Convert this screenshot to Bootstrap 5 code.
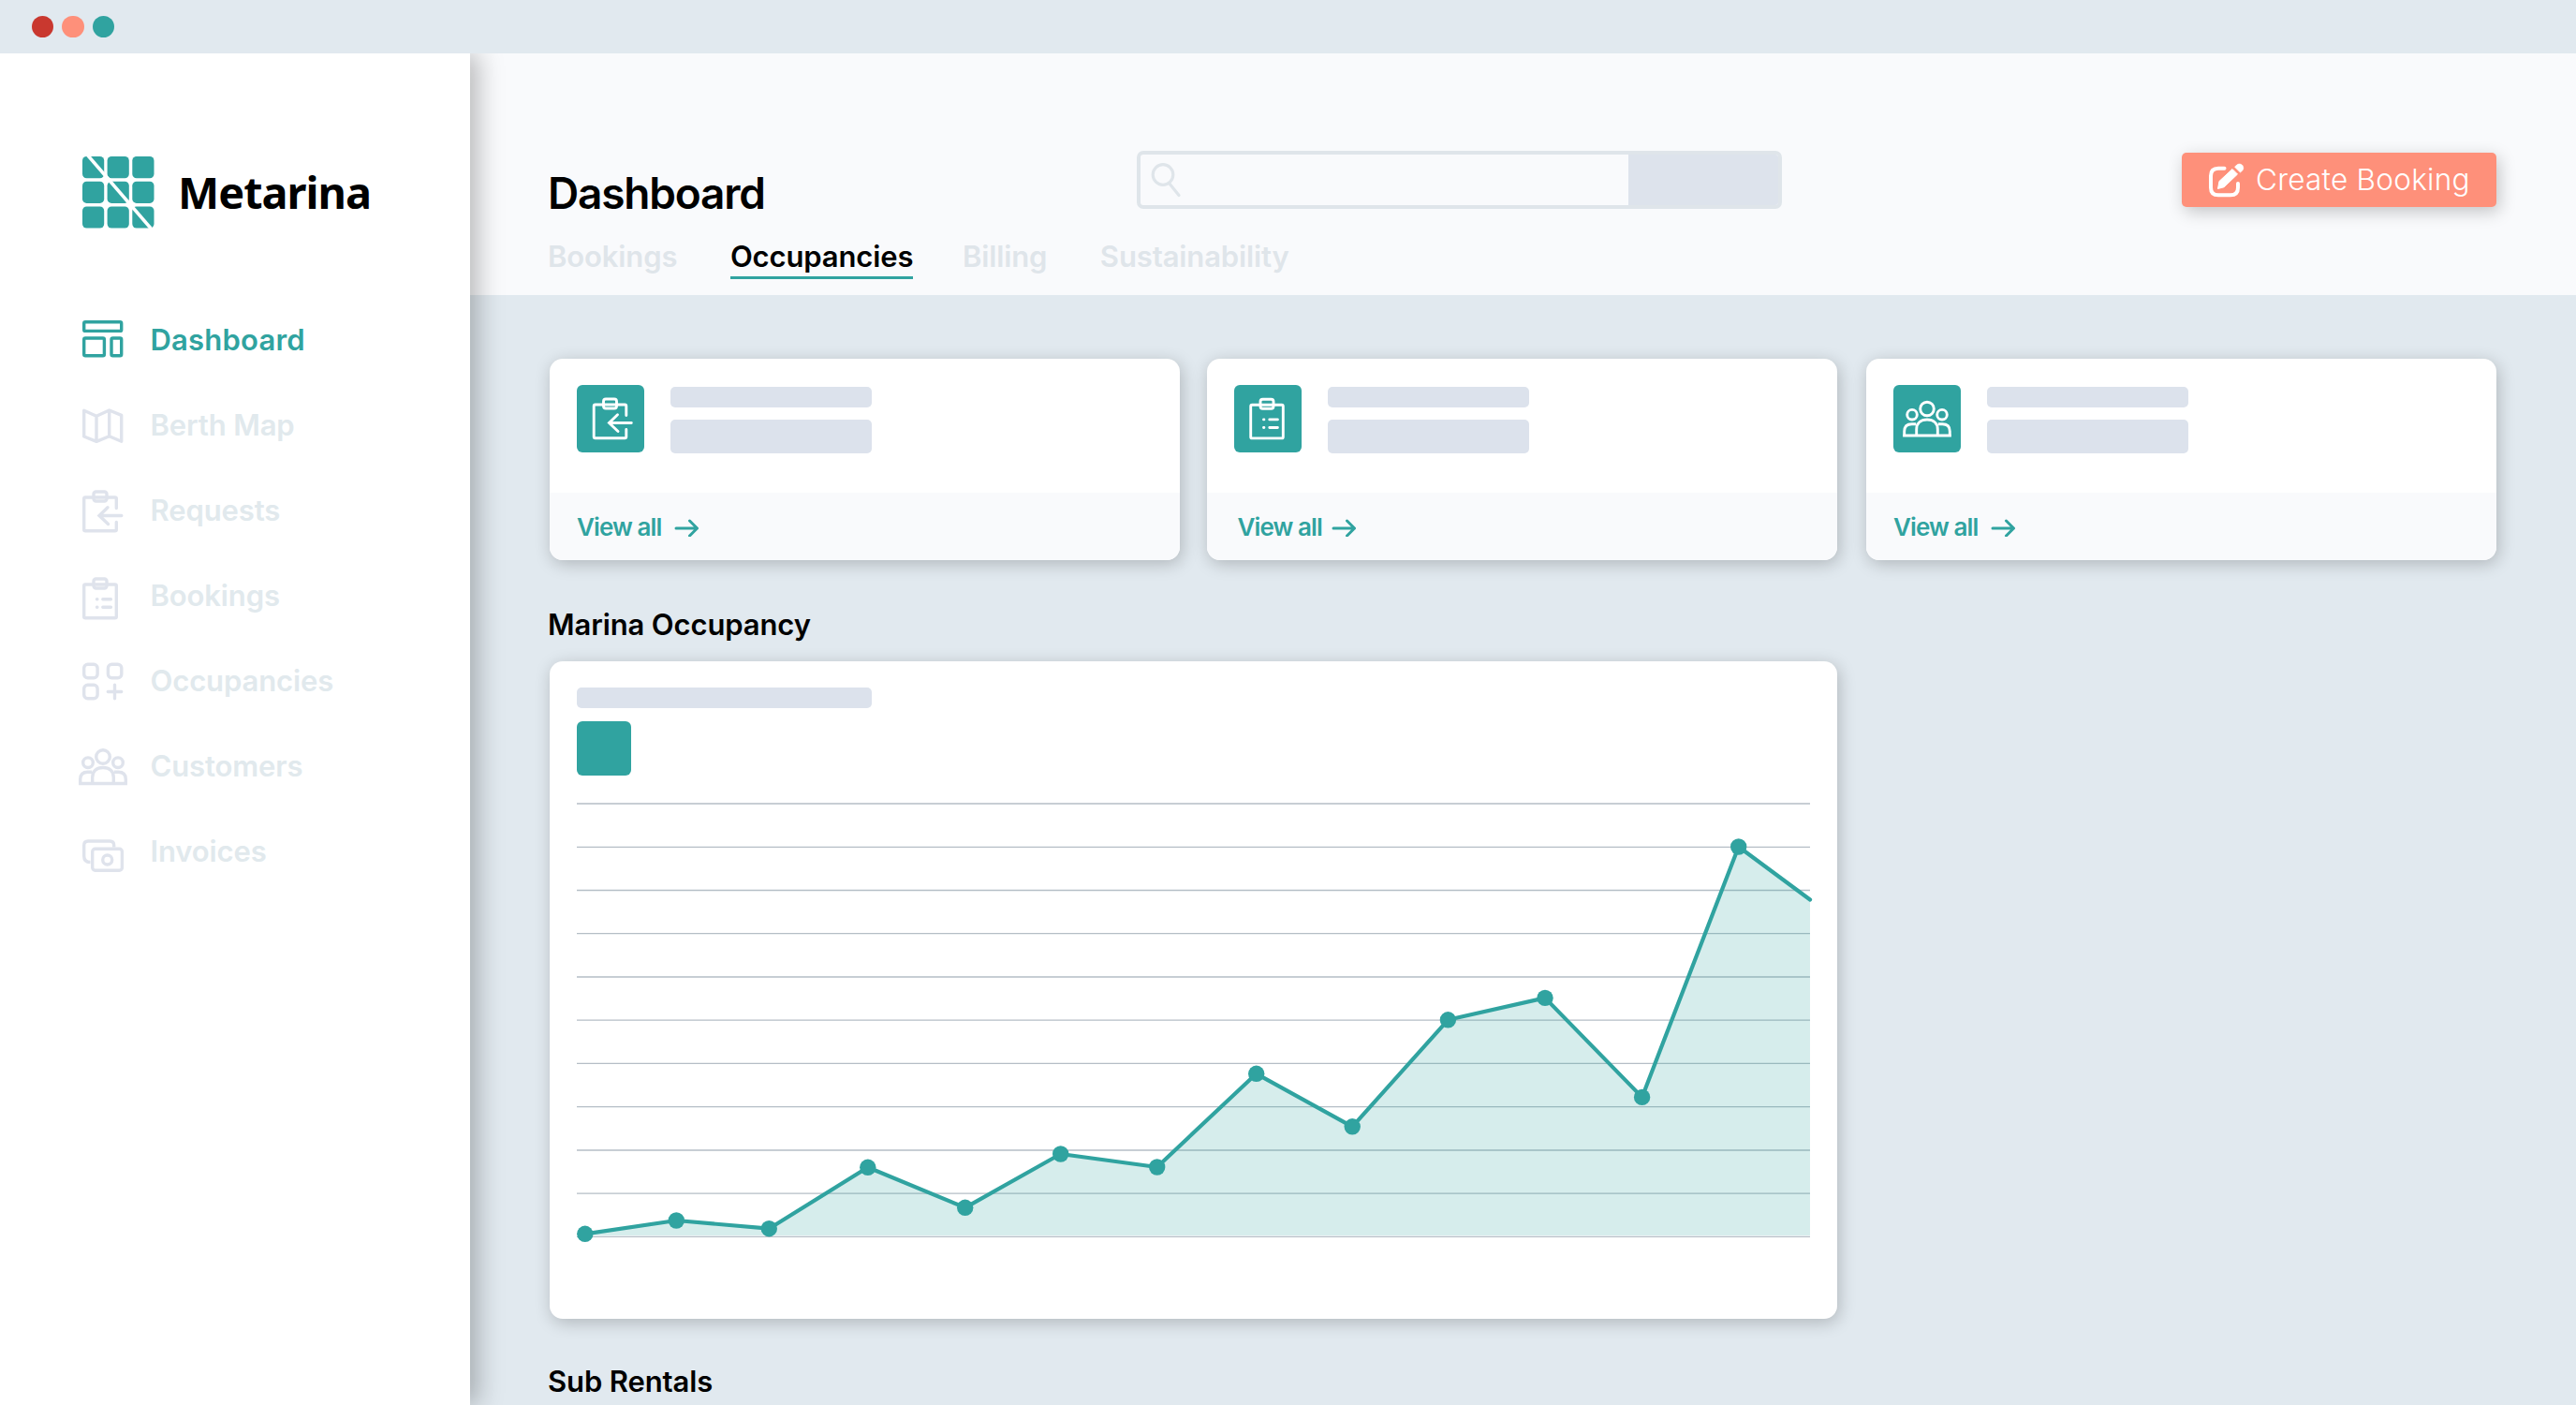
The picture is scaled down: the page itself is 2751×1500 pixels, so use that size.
<!DOCTYPE html>
<html lang="en">
<head>
  <meta charset="UTF-8">
  <meta name="viewport" content="width=device-width, initial-scale=1.0">
  <title>Metarina</title>
  <link href="https://cdn.jsdelivr.net/npm/bootstrap@5.3.3/dist/css/bootstrap.min.css" rel="stylesheet">
  <style>
    :root { --teal: #30a3a0; --coral: #fe907a; --page: #e1e9ef; --ghost: #dce2ec; --faint: #e1e9ed; }
    body { font-family: Inter, "Liberation Sans", sans-serif; font-size: 31px; line-height: 36px; font-weight: 600; letter-spacing: -.12px; color: #000; background: var(--page); height: 1500px; overflow: hidden; }
    a { text-decoration: none; color: inherit; }
    svg { display: block; flex: none; }

    .titlebar { height: 57px; padding-left: 34px; gap: 9px; }
    .dot { width: 23.4px; height: 23.4px; border-radius: 50%; }
    .dot-red { background: #c9382f; }
    .dot-coral { background: var(--coral); }
    .dot-teal { background: var(--teal); }

    .shell { height: 1443px; overflow: hidden; }
    .sidebar { width: 502px; flex: none; z-index: 1; box-shadow: 8px 0 26px rgba(0, 0, 0, .27); }
    .brand { padding: 110px 0 0 88px; margin-bottom: 73px; gap: 25px; font: 700 46.8px/77px "Noto Sans", sans-serif; letter-spacing: -.95px; }
    .side-item { height: 91px; padding-left: 82px; gap: 22.5px; color: var(--faint); }
    .side-item svg { color: #dfe3ec; }
    .side-item.active, .side-item.active svg { color: var(--teal); }
    .side-item.active { letter-spacing: .2px; }

    .page-head { height: 258px; padding: 104px 85px 0 83px; background: #f9fafc; }
    .head-row { height: 95px; }
    .page-title { width: 629px; margin: 19px 0 0; font-size: 46px; line-height: 52px; font-weight: 600; letter-spacing: -1.2px; }
    .search { width: 689px; height: 62px; border: 4px solid #dfe5ea; border-radius: 7px; overflow: hidden; }
    .search-btn { width: 160px; background: #dde3ec; }
    .btn-create { width: 336px; height: 58px; margin-top: 2px; padding: 0 0 0 27px; gap: 10px; border: 0; border-radius: 5px; background: var(--coral); color: #fff; font-size: 31.5px; font-weight: 300; letter-spacing: .25px; box-shadow: 3px 5px 18px rgba(0, 0, 0, .22); }
    .head-tabs { gap: 56.5px; color: #dfe5ea; }
    .head-tabs a { height: 42px; }
    .head-tabs .active { color: #000; border-bottom: 3px solid var(--teal); margin-right: -4px; }

    .content { padding: 68px 0 0 85px; }
    .stat-row { gap: 28.5px; }
    .panel { background: #fff; border: 0; border-radius: 14px; box-shadow: 2px 4px 18px rgba(0, 0, 0, .22); overflow: hidden; }
    .stat { width: 673px; height: 215px; }
    .stat:last-child { margin-left: 3px; }
    .stat-body { height: 143px; padding: 28px 29px; gap: 28px; }
    .stat-foot { height: 72px; padding: 2px 0 0 29px; gap: 14px; background: #f9fafc; color: var(--teal); font-size: 26px; letter-spacing: -.9px; }
    .stat:nth-child(2) .stat-foot { padding-left: 33px; gap: 10px; }
    .tile { width: 72px; height: 72px; border-radius: 6px; background: var(--teal); color: #fff; }
    .ghost { background: var(--ghost); border-radius: 5px; width: 215px; }
    .ghost-sm { height: 22px; margin: 2px 0 13px; }
    .ghost-lg { height: 36px; }
    .section-title { font-size: 31px; line-height: 36px; font-weight: 600; margin: 51px 0 21px -2px; }
    .chart-card { width: 1375px; height: 702px; padding: 28px 29px; margin-bottom: 49px; }
    .chart-card .ghost { width: 315px; height: 22px; }
    .swatch { width: 58px; height: 58px; margin: 14px 0 30px; border-radius: 6px; background: var(--teal); }
  </style>
</head>
<body>
  <!-- icon set -->
  <svg width="0" height="0" class="position-absolute">
    <defs>
      <symbol id="i-dashboard" viewBox="0 0 56 56"><rect x="7.7" y="8.7" width="40" height="9.7" rx="1.5"/><rect x="7.7" y="26" width="21.7" height="18.7" rx="1.5"/><rect x="37" y="26" width="10.7" height="18.7" rx="1.5"/></symbol>
      <symbol id="i-map" viewBox="0 0 56 56"><path d="M7.7 12.2 21 18.2 34.7 12l13 5.4V45.3l-13-5.6L21 45.4 7.7 40zM21 18.2v27M34.7 12v27.7"/></symbol>
      <g id="g-clip"><rect x="18" y="8" width="14" height="10" rx="2.5"/></g>
      <symbol id="i-requests" viewBox="0 0 56 56" overflow="visible"><use href="#g-clip"/><path d="M42.3 25.5V15.5q0-1.5-1.5-1.5H9.2q-1.5 0-1.5 1.5v32.7q0 1.5 1.5 1.5h31.6q1.5 0 1.5-1.5V40.5M47.8 33.5H24M33 24.8 24 33.5l9.5 9"/></symbol>
      <symbol id="i-bookings" viewBox="0 0 56 56" overflow="visible"><use href="#g-clip" y="2"/><rect x="7.7" y="16" width="34.6" height="35.7" rx="1.5"/><path d="M21.5 31.7h.4M27.8 31.7h8.6M21.5 40.3h.4M27.8 40.3h8.6"/></symbol>
      <symbol id="i-occupancies" viewBox="0 0 56 56"><rect x="7.7" y="10.3" width="14.4" height="14.4" rx="4"/><rect x="33.4" y="10.3" width="14.4" height="14.4" rx="4"/><rect x="7.7" y="32.3" width="14.4" height="14.4" rx="4"/><path d="M40.5 32.3v14.4M33.3 39.5h14.4"/></symbol>
      <symbol id="i-customers" viewBox="0 0 56 56" overflow="visible"><circle cx="28" cy="18" r="7.3"/><circle cx="12" cy="24.2" r="5.3"/><circle cx="44" cy="24.2" r="5.3"/><path d="M3.7 46.5V42c0-5 3-7.8 8-7.8h4.5M52.3 46.5V42c0-5-3-7.8-8-7.8h-4.5M16.7 46.5V40c0-6.5 4.5-10.5 11.3-10.5S39.3 33.5 39.3 40v6.5M2.1 46.5h51.8"/></symbol>
      <symbol id="i-invoices" viewBox="0 0 56 56"><rect x="16.7" y="25.3" width="31.7" height="23" rx="3"/><circle cx="32.7" cy="37" r="5"/><path d="M14.5 39.5c-4.5 0-6.8-2.3-6.8-6.5V21.5q0-4.5 4.5-4.5h23q4.5 0 4.5 4.5v2"/></symbol>
      <symbol id="i-arrow" viewBox="0 0 27 20"><path d="M2 11h22.5M16.5 3l8 8-8 8"/></symbol>
    </defs>
  </svg>

  <div class="titlebar d-flex align-items-center">
    <span class="dot dot-red"></span>
    <span class="dot dot-coral"></span>
    <span class="dot dot-teal"></span>
  </div>

  <div class="shell d-flex">
    <aside class="sidebar bg-white position-relative">
      <div class="brand d-flex align-items-center">
        <svg width="77" height="77" viewBox="0 0 77 77">
          <g fill="#30a3a0">
            <rect x="0" y="0" width="23.2" height="23.2" rx="4.5"/><rect x="26.6" y="0" width="23.2" height="23.2" rx="4.5"/><rect x="53.3" y="0" width="23.2" height="23.2" rx="4.5"/>
            <rect x="0" y="26.7" width="23.2" height="23.2" rx="4.5"/><rect x="26.6" y="26.7" width="23.2" height="23.2" rx="4.5"/><rect x="53.3" y="26.7" width="23.2" height="23.2" rx="4.5"/>
            <rect x="0" y="53.4" width="23.2" height="23.2" rx="4.5"/><rect x="26.6" y="53.4" width="23.2" height="23.2" rx="4.5"/><rect x="53.3" y="53.4" width="23.2" height="23.2" rx="4.5"/>
          </g>
          <path d="M5-2 75 79" stroke="#fff" stroke-width="3.6"/>
        </svg>
        <span>Metarina</span>
      </div>
      <nav class="nav flex-column flex-nowrap">
        <a href="#" class="side-item active d-flex align-items-center"><svg width="56" height="56" fill="none" stroke="currentColor" stroke-width="3.4"><use href="#i-dashboard"/></svg><span>Dashboard</span></a>
        <a href="#" class="side-item d-flex align-items-center"><svg width="56" height="56" fill="none" stroke="currentColor" stroke-width="3.4" stroke-linejoin="round"><use href="#i-map"/></svg><span>Berth Map</span></a>
        <a href="#" class="side-item d-flex align-items-center"><svg width="56" height="56" fill="none" stroke="currentColor" stroke-width="3.4" stroke-linecap="round"><use href="#i-requests"/></svg><span>Requests</span></a>
        <a href="#" class="side-item d-flex align-items-center"><svg width="56" height="56" fill="none" stroke="currentColor" stroke-width="3.4" stroke-linecap="round"><use href="#i-bookings"/></svg><span>Bookings</span></a>
        <a href="#" class="side-item d-flex align-items-center"><svg width="56" height="56" fill="none" stroke="currentColor" stroke-width="3.4" stroke-linecap="round"><use href="#i-occupancies"/></svg><span>Occupancies</span></a>
        <a href="#" class="side-item d-flex align-items-center"><svg width="56" height="56" fill="none" stroke="currentColor" stroke-width="3.4"><use href="#i-customers"/></svg><span>Customers</span></a>
        <a href="#" class="side-item d-flex align-items-center"><svg width="56" height="56" fill="none" stroke="currentColor" stroke-width="3.4"><use href="#i-invoices"/></svg><span>Invoices</span></a>
      </nav>
    </aside>

    <main class="flex-grow-1">
      <header class="page-head">
        <div class="head-row d-flex align-items-start">
          <h1 class="page-title">Dashboard</h1>
          <div class="search d-flex justify-content-between">
            <svg width="54" height="54" viewBox="0 0 54 54" fill="none" stroke="#dfe5ea" stroke-width="3.2" stroke-linecap="round"><circle cx="24" cy="21.5" r="10.8"/><path d="M31.3 31.5 41 43.5"/></svg>
            <span class="search-btn"></span>
          </div>
          <button type="button" class="btn btn-create ms-auto d-flex align-items-center">
            <svg width="42" height="42" viewBox="0 0 42 42">
              <path d="M18.5 8.8H12q-8 0-8 8v12.5q0 8 8 8h13q8 0 8-8V25" fill="none" stroke="#fff" stroke-width="4" stroke-linecap="round"/>
              <path d="M11.5 30.5 13 22.5 27 9.5l5.5 5.5L18 28.8z" fill="#fff" stroke="#fff" stroke-width="1" stroke-linejoin="round"/>
              <path d="M29.5 7.3 31.5 5.3a4.2 4.2 0 0 1 6 6l-2.1 1.8z" fill="#fff" stroke="#fff" stroke-width=".6"/>
            </svg>
            <span>Create Booking</span>
          </button>
        </div>
        <nav class="head-tabs d-flex">
          <a href="#">Bookings</a>
          <a href="#" class="active">Occupancies</a>
          <a href="#">Billing</a>
          <a href="#">Sustainability</a>
        </nav>
      </header>

      <section class="content">
        <div class="stat-row d-flex">
          <div class="card panel stat">
            <div class="stat-body d-flex">
              <div class="tile"><svg width="72" height="72" viewBox="-10.5 -7 72 72" fill="none" stroke="currentColor" stroke-width="2.9" stroke-linecap="round"><use href="#i-requests" width="56" height="56"/></svg></div>
              <div><div class="ghost ghost-sm"></div><div class="ghost ghost-lg"></div></div>
            </div>
            <a href="#" class="stat-foot d-flex align-items-center"><span>View all</span><svg width="27" height="20" fill="none" stroke="currentColor" stroke-width="3" stroke-linecap="round" stroke-linejoin="round"><use href="#i-arrow"/></svg></a>
          </div>
          <div class="card panel stat">
            <div class="stat-body d-flex">
              <div class="tile"><svg width="72" height="72" viewBox="-10 -5.2 72 72" fill="none" stroke="currentColor" stroke-width="2.9" stroke-linecap="round"><use href="#i-bookings" width="56" height="56"/></svg></div>
              <div><div class="ghost ghost-sm"></div><div class="ghost ghost-lg"></div></div>
            </div>
            <a href="#" class="stat-foot d-flex align-items-center"><span>View all</span><svg width="27" height="20" fill="none" stroke="currentColor" stroke-width="3" stroke-linecap="round" stroke-linejoin="round"><use href="#i-arrow"/></svg></a>
          </div>
          <div class="card panel stat">
            <div class="stat-body d-flex">
              <div class="tile"><svg width="72" height="72" viewBox="-8 -7.5 72 72" fill="none" stroke="currentColor" stroke-width="2.9"><use href="#i-customers" width="56" height="56"/></svg></div>
              <div><div class="ghost ghost-sm"></div><div class="ghost ghost-lg"></div></div>
            </div>
            <a href="#" class="stat-foot d-flex align-items-center"><span>View all</span><svg width="27" height="20" fill="none" stroke="currentColor" stroke-width="3" stroke-linecap="round" stroke-linejoin="round"><use href="#i-arrow"/></svg></a>
          </div>
        </div>

        <h2 class="section-title">Marina Occupancy</h2>
        <div class="card panel chart-card">
          <div class="ghost"></div>
          <div class="swatch"></div>
          <svg width="1317" height="464" viewBox="616 858 1317 464" overflow="visible">
            <!-- grid lines -->
            <path d="M616 858H1933M616 904.3H1933M616 950.5H1933M616 996.7H1933M616 1043H1933M616 1089.2H1933M616 1135.4H1933M616 1181.7H1933M616 1228H1933M616 1274.2H1933M616 1320.4H1933" stroke="#b5bec6" stroke-width="1.3"/>
            <!-- occupancy trend -->
            <path d="M624.8 1317.3 722.3 1303 821.3 1311.7 926.8 1246.3 1030.7 1289.3 1132.7 1232 1235.7 1246 1341.7 1146.3 1444.2 1202.8 1546.4 1088.8 1650 1065.4 1753.6 1171.4 1856.7 904 1933 960.5V1319H624.8z" fill="#30a3a0" fill-opacity=".2"/>
            <path d="M624.8 1317.3 722.3 1303 821.3 1311.7 926.8 1246.3 1030.7 1289.3 1132.7 1232 1235.7 1246 1341.7 1146.3 1444.2 1202.8 1546.4 1088.8 1650 1065.4 1753.6 1171.4 1856.7 904 1933 960.5" fill="none" stroke="#30a3a0" stroke-width="4.2" stroke-linecap="round" stroke-linejoin="round"/>
            <g fill="#30a3a0">
              <circle cx="624.8" cy="1317.3" r="8.7"/>
              <circle cx="722.3" cy="1303" r="8.7"/>
              <circle cx="821.3" cy="1311.7" r="8.7"/>
              <circle cx="926.8" cy="1246.3" r="8.7"/>
              <circle cx="1030.7" cy="1289.3" r="8.7"/>
              <circle cx="1132.7" cy="1232" r="8.7"/>
              <circle cx="1235.7" cy="1246" r="8.7"/>
              <circle cx="1341.7" cy="1146.3" r="8.7"/>
              <circle cx="1444.2" cy="1202.8" r="8.7"/>
              <circle cx="1546.4" cy="1088.8" r="8.7"/>
              <circle cx="1650" cy="1065.4" r="8.7"/>
              <circle cx="1753.6" cy="1171.4" r="8.7"/>
              <circle cx="1856.7" cy="904" r="8.7"/>
            </g>
          </svg>
        </div>
        <h2 class="section-title mt-0">Sub Rentals</h2>
      </section>
    </main>
  </div>
  <script src="https://cdn.jsdelivr.net/npm/bootstrap@5.3.3/dist/js/bootstrap.bundle.min.js"></script>
</body>
</html>
